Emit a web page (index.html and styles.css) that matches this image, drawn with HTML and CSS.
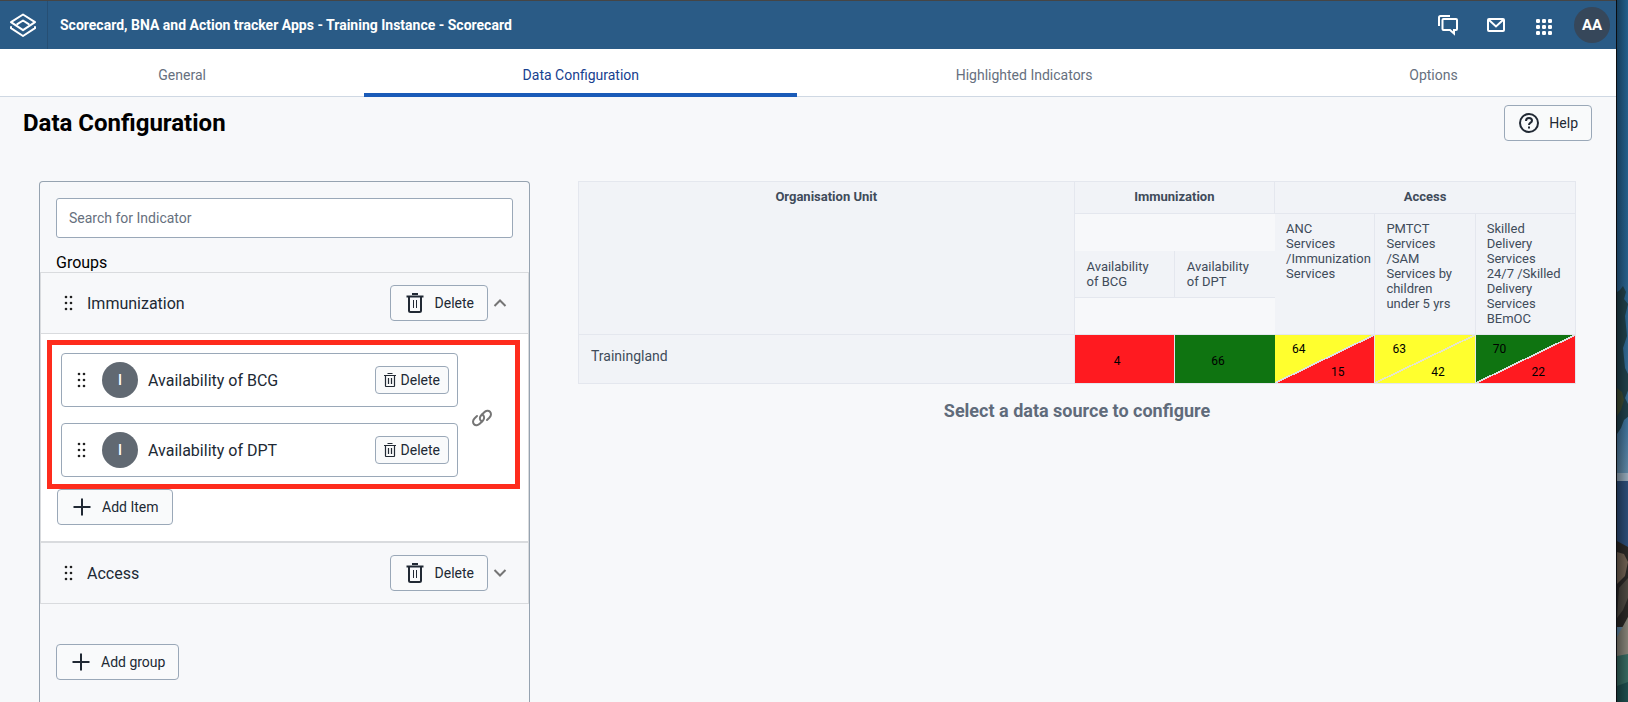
FILE: index.html
```html
<!DOCTYPE html>
<html lang="en">
<head>
<meta charset="utf-8">
<meta name="viewport" content="width=device-width, initial-scale=1">
<title>Scorecard - Data Configuration</title>
<link rel="stylesheet" href="styles.css">
</head>
<body>
<svg class="sprite" aria-hidden="true">
  <symbol id="trash" viewBox="0 0 24 24"><path d="M9 2h6v2H9zM3.500 4.500h17v2h-17z" fill="currentColor"/><path d="M6 6v13.500c0 1 .5 1.500 1.500 1.500h9c1 0 1.500-.5 1.500-1.500V6" fill="none" stroke="currentColor" stroke-width="2"/><path d="M10.500 9v8M13.500 9v8" stroke="currentColor" fill="none"/></symbol>
  <symbol id="trash-small" viewBox="0 0 16 16"><path d="M5.500 1.500h5M2 3.500h12M3.500 3.500v10.500c0 .4.200.5.500.5h8c.3 0 .5-.1.500-.5V3.500M6.500 6v6M9.500 6v6" fill="none" stroke="currentColor" stroke-width="1.200"/></symbol>
  <symbol id="plus" viewBox="0 0 24 24"><path d="M12 3.500v17M3.500 12h17" fill="none" stroke="currentColor" stroke-width="2"/></symbol>
  <symbol id="drag" viewBox="0 0 10 16"><g fill="currentColor"><circle cx="2" cy="2" r="1.300"/><circle cx="7" cy="2" r="1.300"/><circle cx="2" cy="8" r="1.300"/><circle cx="7" cy="8" r="1.300"/><circle cx="2" cy="14" r="1.300"/><circle cx="7" cy="14" r="1.300"/></g></symbol>
</svg>
<div class="app">
  <header class="topbar">
    <a class="logo" href="#" aria-label="Home">
      <svg viewBox="0 0 28 26" width="28" height="26" fill="none" stroke="currentColor" stroke-width="2" stroke-linejoin="round" stroke-linecap="round"><path d="M14 2.500 26 10.200 14 18.200 2 10.200z"/><path d="M8.300 12.200 14 8.500l5.700 3.700"/><path d="M2 15v1.200L14 24l12-7.800V15"/></svg>
    </a>
    <span class="app-name">Scorecard, BNA and Action tracker Apps - Training Instance - Scorecard</span>
    <nav class="tools">
      <a href="#" aria-label="Interpretations"><svg viewBox="0 0 24 24" width="24" height="24" fill="none" stroke="currentColor" stroke-width="2"><path d="M3 13V4.500C3 3.500 3.500 3 4.500 3H14"/><path d="M7.500 6h12.500c.7 0 1 .3 1 1v9c0 .7-.3 1-1 1h-2v3.500L14 17H7.500c-.7 0-1-.3-1-1V7c0-.7.3-1 1-1z"/></svg></a>
      <a href="#" aria-label="Messages"><svg viewBox="0 0 24 24" width="24" height="24" fill="none" stroke="currentColor" stroke-width="2"><rect x="4" y="6" width="16" height="12" rx="1"/><path d="m5 7 7 6.500L19 7"/></svg></a>
      <a href="#" aria-label="Apps"><svg viewBox="0 0 24 24" width="24" height="24" fill="currentColor"><rect x="4" y="6" width="4" height="4" rx="1.200"/><rect x="10" y="6" width="4" height="4" rx="1.200"/><rect x="16" y="6" width="4" height="4" rx="1.200"/><rect x="4" y="12" width="4" height="4" rx="1.200"/><rect x="10" y="12" width="4" height="4" rx="1.200"/><rect x="16" y="12" width="4" height="4" rx="1.200"/><rect x="4" y="18" width="4" height="4" rx="1.200"/><rect x="10" y="18" width="4" height="4" rx="1.200"/><rect x="16" y="18" width="4" height="4" rx="1.200"/></svg></a>
      <button class="profile" type="button">AA</button>
    </nav>
  </header>

  <nav class="tabs">
    <a class="tab" href="#">General</a>
    <a class="tab active" href="#">Data Configuration</a>
    <a class="tab" href="#">Highlighted Indicators</a>
    <a class="tab" href="#">Options</a>
  </nav>

  <main class="page">
    <div class="page-head">
      <h1>Data Configuration</h1>
      <button class="btn" type="button"><svg class="icon" viewBox="0 0 24 24" fill="none" stroke="currentColor" stroke-width="2"><circle cx="12" cy="12" r="9"/><path d="M9 10c0-1.800 1.300-3 3-3s3 1.100 3 2.700c0 2-3 2-3 4.300"/><path d="M12 15.500v2"/></svg>Help</button>
    </div>

    <div class="workspace">
      <section class="panel">
        <div class="panel-top">
          <input class="search" type="text" placeholder="Search for Indicator" aria-label="Search for Indicator">
          <h2>Groups</h2>
        </div>

        <div class="group">
          <div class="group-head">
            <svg class="drag"><use href="#drag"/></svg>
            <span class="group-name">Immunization</span>
            <button class="btn" type="button"><svg class="icon"><use href="#trash"/></svg>Delete</button>
            <button class="toggle" type="button" aria-label="Collapse"><svg viewBox="0 0 14 8" width="14" height="8"><path d="m1.500 7 5.500-5.500L12.500 7"/></svg></button>
          </div>
          <div class="group-body">
            <div class="linked">
              <div class="items">
                <div class="item">
                  <svg class="drag"><use href="#drag"/></svg>
                  <span class="badge">I</span>
                  <span class="item-name">Availability of BCG</span>
                  <button class="btn small" type="button"><svg class="icon-small"><use href="#trash-small"/></svg>Delete</button>
                </div>
                <div class="item">
                  <svg class="drag"><use href="#drag"/></svg>
                  <span class="badge">I</span>
                  <span class="item-name">Availability of DPT</span>
                  <button class="btn small" type="button"><svg class="icon-small"><use href="#trash-small"/></svg>Delete</button>
                </div>
              </div>
              <button class="link" type="button" aria-label="Unlink"><svg viewBox="0 0 22 18" width="22" height="18" fill="none" stroke="currentColor" stroke-width="2" stroke-linecap="round"><path d="M11 12.500C8.500 11.500 8.200 8.500 10 6.500L13 3.500c2-2 4.500-2.200 6-.7s1.300 4-.7 6L16 11"/><path d="M11 5.500c2.500 1 2.800 4 1 6L9 14.500c-2 2-4.500 2.200-6 .7s-1.300-4 .7-6L6 7"/></svg></button>
            </div>
            <button class="btn add-item" type="button"><svg class="icon"><use href="#plus"/></svg>Add Item</button>
          </div>
        </div>

        <div class="group">
          <div class="group-head">
            <svg class="drag"><use href="#drag"/></svg>
            <span class="group-name">Access</span>
            <button class="btn" type="button"><svg class="icon"><use href="#trash"/></svg>Delete</button>
            <button class="toggle" type="button" aria-label="Expand"><svg viewBox="0 0 14 8" width="14" height="8"><path d="m1.500 1 5.500 5.500L12.500 1"/></svg></button>
          </div>
        </div>

        <div class="panel-foot">
          <button class="btn" type="button"><svg class="icon"><use href="#plus"/></svg>Add group</button>
        </div>
      </section>

      <section class="preview">
        <table class="scorecard">
          <colgroup><col><col class="data-col"><col class="data-col"><col class="data-col"><col class="data-col"><col class="data-col"></colgroup>
          <thead>
            <tr>
              <th rowspan="2">Organisation Unit</th>
              <th colspan="2">Immunization</th>
              <th colspan="3">Access</th>
            </tr>
            <tr class="sub">
              <th class="floating"><div class="label ruled">Availability of BCG</div></th>
              <th class="floating"><div class="label">Availability of DPT</div></th>
              <th>ANC Services /Immunization Services</th>
              <th>PMTCT Services /SAM Services by children under 5 yrs</th>
              <th>Skilled Delivery Services 24/7 /Skilled Delivery Services BEmOC</th>
            </tr>
          </thead>
          <tbody>
            <tr>
              <td class="unit">Trainingland</td>
              <td class="value red">4</td>
              <td class="value green">66</td>
              <td class="pair yellow-red"><div class="split"><span>64</span><span>15</span></div></td>
              <td class="pair yellow-yellow"><div class="split"><span>63</span><span>42</span></div></td>
              <td class="pair green-red"><div class="split"><span>70</span><span>22</span></div></td>
            </tr>
          </tbody>
        </table>
        <p class="hint">Select a data source to configure</p>
      </section>
    </div>
  </main>
</div>
<svg class="wallpaper" viewBox="0 0 11 702" preserveAspectRatio="none" aria-hidden="true">
  <defs>
    <linearGradient id="sky" x1="0" y1="0" x2="0" y2="1"><stop offset="0" stop-color="#235f8c"/><stop offset=".4" stop-color="#265f8a"/><stop offset=".6" stop-color="#3b6f97"/><stop offset=".68" stop-color="#5f86a2"/></linearGradient>
    <linearGradient id="shade"><stop offset="0" stop-opacity=".35"/><stop offset="1" stop-opacity="0"/></linearGradient>
  </defs>
  <path fill="url(#sky)" d="M0 0h11v702H0z"/>
  <path fill="#1f3f49" d="M0 292l3-2 3-4 3 6-2 7 4 5-3 12 2 20-4 12 2 20 4 8v12l-4 10 4 8v10l-5 4-3 8-4 6z"/>
  <path fill="#3c4a32" d="M0 388l5 4 2 8-3 10-4 6z"/>
  <path fill="#8fa4b4" d="M0 473h11v8H0z"/>
  <path fill="#2b4b75" d="M0 481h11v66H0z"/>
  <path fill="#292725" d="M0 541l11 6v80H0z"/>
  <path fill="#6d5e50" d="M0 552l7 2 4 8-3 14-8 8z"/>
  <path fill="#4b4740" d="M2 588l9-10v20l-5 12-6 8z"/>
  <path fill="#827f74" d="M0 637l11-20v43l-11 4z"/>
  <path fill="#35675e" d="M0 656l11-2v48H0z"/>
  <path fill="#1d4c4c" d="M0 686l11-4v20H0z"/>
  <path fill="url(#shade)" d="M0 0h11v702H0z"/>
</svg>
</body>
</html>
```

FILE: styles.css
```css
* {
  box-sizing: border-box;
}

body {
  margin: 0;
  height: 100vh;
  overflow: hidden;
  display: flex;
  background: #0b0d10;
  color: #212934;
  font-family: Roboto, "Liberation Sans", sans-serif;
  font-size: 14px;
}

button,
input {
  font: inherit;
  color: inherit;
}

a {
  color: inherit;
  text-decoration: none;
}

.sprite {
  position: absolute;
  width: 0;
  height: 0;
}

.app {
  flex: 1;
  min-width: 0;
  display: flex;
  flex-direction: column;
  background: #f7f8fa;
  border-top: 1px solid #454545;
}

.wallpaper {
  width: 11px;
  height: 100%;
  margin-left: 1px;
}

/* Top bar */
.topbar {
  height: 48px;
  flex: none;
  display: flex;
  align-items: center;
  background: #2a5b86;
  color: #fff;
}

.logo {
  width: 48px;
  height: 48px;
  padding-left: 9px;
  display: flex;
  align-items: center;
  border-right: 1px solid #264f74;
}

.app-name {
  padding-left: 12px;
  font-weight: 700;
}

.tools {
  margin-left: auto;
  padding-right: 6px;
  display: flex;
  align-items: center;
  gap: 24px;
}

.tools a {
  display: flex;
}

.profile {
  width: 36px;
  height: 36px;
  margin-left: -6px;
  padding: 0;
  border: 0;
  border-radius: 50%;
  background: #36475a;
  font-size: 15px;
  font-weight: 700;
}

/* Tabs */
.tabs {
  flex: none;
  height: 48px;
  display: flex;
  background: #fff;
  color: #66707e;
}

.tab {
  flex: 1 1 auto;
  padding-top: 4px;
  display: flex;
  align-items: center;
  justify-content: center;
  border-bottom: 1px solid #cfd8e3;
}

.tab.active {
  color: #17418f;
  border-bottom: 4px solid #1a5bb8;
  padding-top: 7px;
}

/* Page */
.page {
  flex: 1;
  min-height: 0;
  display: flex;
  flex-direction: column;
}

.page-head {
  display: flex;
  align-items: center;
  justify-content: space-between;
  padding: 8px 24px 0 23px;
}

h1 {
  margin: 0;
  font-size: 24px;
  line-height: 32px;
  font-weight: 700;
  color: #000;
}

.btn {
  height: 36px;
  padding: 0 13px 0 12px;
  display: inline-flex;
  align-items: center;
  gap: 8px;
  border: 1px solid #9aa8b8;
  border-radius: 4px;
  background: #f9fafb;
  color: #212934;
}

.btn.small {
  height: 28px;
  padding: 0 8px 0 6px;
  gap: 3px;
}

.icon {
  width: 24px;
  height: 24px;
}

.icon-small {
  width: 16px;
  height: 16px;
}

.workspace {
  flex: 1;
  min-height: 0;
  display: grid;
  grid-template-columns: minmax(0, 491fr) minmax(0, 998fr);
  gap: 48px;
  padding: 40px 40px 0 39px;
}

/* Group panel */
.panel {
  border: 1px solid #96a3b0;
  border-bottom: 0;
  border-radius: 4px 4px 0 0;
}

.panel-top {
  padding: 16px 16px 0;
}

.search {
  display: block;
  width: 100%;
  height: 40px;
  padding: 0 12px;
  border: 1px solid #9aa8b8;
  border-radius: 3px;
  background: #fff;
}

.search::placeholder {
  color: #66707e;
  opacity: 1;
}

h2 {
  margin: 0;
  padding-top: 15px;
  font-size: 16px;
  line-height: 19px;
  font-weight: 400;
  color: #000;
}

.group {
  border: 1px solid #d9dbde;
}

.group-head {
  height: 60px;
  padding: 0 21px 0 23px;
  display: flex;
  align-items: center;
}

.drag {
  flex: none;
  width: 10px;
  height: 16px;
  color: #212121;
}

.group-name {
  flex: 1;
  padding-left: 13px;
  font-size: 16px;
}

.toggle,
.link {
  padding: 0;
  border: 0;
  background: none;
  display: flex;
  color: #757575;
}

.toggle {
  margin-left: 5px;
}

.toggle path {
  fill: none;
  stroke: currentColor;
  stroke-width: 2;
}

.group-body {
  padding: 6px 8px 16px 6px;
  background: #fff;
  border-top: 1px solid #d9dbde;
}

.linked {
  display: flex;
  align-items: center;
  padding: 8px 22px 7px 9px;
  border: 5px solid #fe2c1d;
}

.items {
  flex: 1;
  min-width: 0;
  display: grid;
  gap: 16px;
}

.item {
  height: 54px;
  padding: 0 8px 0 15px;
  display: flex;
  align-items: center;
  border: 1px solid #9aa8b8;
  border-radius: 4px;
}

.badge {
  width: 36px;
  height: 36px;
  margin-left: 15px;
  display: flex;
  align-items: center;
  justify-content: center;
  border-radius: 50%;
  background: #616972;
  color: #fff;
  font-weight: 500;
}

.item-name {
  flex: 1;
  padding-left: 10px;
  font-size: 16px;
}

.link {
  margin-left: 13px;
  padding-top: 6px;
}

.add-item {
  margin-left: 10px;
}

.panel-foot {
  padding: 40px 16px 0;
}

/* Scorecard preview */
.scorecard {
  width: 100%;
  table-layout: fixed;
  border-collapse: separate;
  border-spacing: 0;
  border: 1px solid #e4e7ee;
  border-width: 1px 0 0 1px;
  color: #404b5a;
  font-size: 13px;
  line-height: 15px;
}

.data-col {
  width: 10.06%;
}

.scorecard th,
.unit {
  padding: 8px 12px;
  background: #f1f3f7;
  vertical-align: top;
  border: 1px solid #e4e7ee;
  border-width: 0 1px 1px 0;
}

.scorecard tr:first-child th {
  padding: 7px 12px 9px;
}

.scorecard .sub th {
  padding: 7px 11px 8px;
  font-weight: 400;
  text-align: left;
}

.scorecard .sub .floating {
  padding: 0;
  background: none;
  border-right: 0;
  vertical-align: middle;
}

.label {
  padding: 8px 12px;
  background: #f1f3f7;
  border-bottom: 1px solid #e4e7ee;
}

.label.ruled {
  border-right: 1px solid #e4e7ee;
}

.scorecard .unit {
  padding: 13px 12px 12px;
  font-size: 14px;
  line-height: 16px;
}

.value,
.pair {
  height: 49px;
  padding: 0;
  border-bottom: 1px solid #e4e7ee;
  color: #000;
  font-size: 12px;
}

.value {
  padding-top: 5px;
  padding-right: 14px;
  text-align: center;
}

.red {
  background: #ff1a20;
  border-right: 1px solid #e4e7ee;
}

.green {
  background: #0f7411;
}

.split {
  height: 48px;
  padding: 7px 30px 3px 17px;
  display: flex;
  flex-direction: column;
  justify-content: space-between;
}

.split span:last-child {
  align-self: flex-end;
}

.pair {
  border-right: 1px solid #e4e7ee;
}

.yellow-red {
  background: linear-gradient(to bottom right, #ffff2e 49%, #e0e0e0 49%, #e0e0e0 51%, #ff1a20 51%);
}

.yellow-yellow {
  background: linear-gradient(to bottom right, #ffff2e 49%, #e6e6c4 49%, #e6e6c4 51%, #ffff2e 51%);
}

.green-red {
  background: linear-gradient(to bottom right, #0f7411 49%, #e0e0e0 49%, #e0e0e0 51%, #ff1a20 51%);
}

.hint {
  margin: 16px 0 0;
  text-align: center;
  font-size: 18px;
  line-height: 21px;
  font-weight: 700;
  color: #606b7a;
}
```
